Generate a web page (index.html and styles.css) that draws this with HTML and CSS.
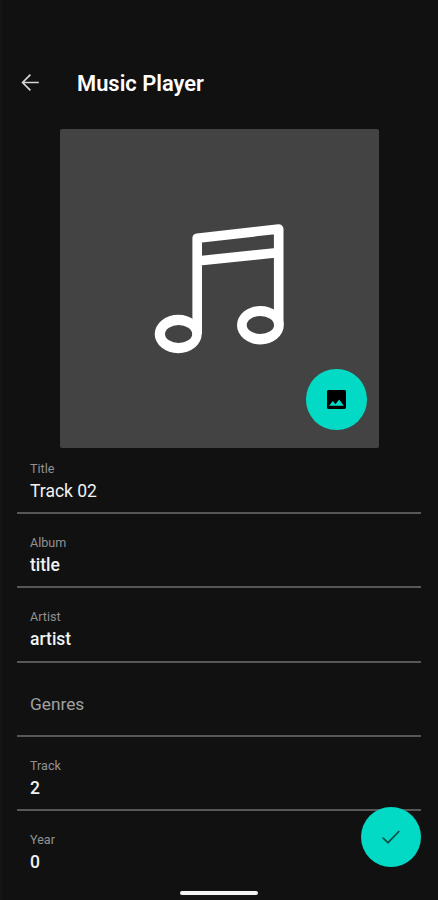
FILE: index.html
```
<!DOCTYPE html>
<html lang="en">
<head>
<meta charset="utf-8">
<title>Music Player</title>
<link rel="stylesheet" href="styles.css">
</head>
<body>
<main class="screen">
  <header class="bar">
    <svg class="back" viewBox="0 0 20 20"><path d="M18.800 9.500H2.700M10.400 1.700L2.600 9.500l7.800 7.800"/></svg>
    <h1 class="heading">Music Player</h1>
  </header>
  <section class="cover">
    <svg class="note" viewBox="0 0 132 132">
      <path d="M43.2 110V14.2L124.7 5V101M43.2 37L124.7 28.6"/>
      <path class="head" fill-rule="evenodd" d="M.7 110a23.5 19.2 0 1 0 47 0a23.5 19.2 0 1 0-47 0zM11 110a13.6 8.9 0 1 1 27.2 0a13.6 8.9 0 1 1-27.2 0z"/>
      <path class="head" fill-rule="evenodd" d="M83 101.2a23.4 19.2 0 1 0 46.8 0a23.4 19.2 0 1 0-46.8 0zM92.7 101a13.7 8.9 0 1 1 27.4 0a13.7 8.9 0 1 1-27.4 0z"/>
    </svg>
    <button class="fab pick" aria-label="Choose image">
      <svg class="image" viewBox="3 3 18 18"><path d="M21 19V4.500c0-.8-.7-1.500-1.500-1.500h-15C3.700 3 3 3.700 3 4.500v15c0 .8.700 1.500 1.500 1.500h15c.8 0 1.500-.7 1.500-1.500zM8.500 13.500l2.500 3.010L14.500 12l4.500 6H5l3.500-4.500z"/></svg>
    </button>
  </section>
  <form class="fields">
    <div class="field"><span class="label">Title</span><span class="value track">Track 02</span></div>
    <div class="field"><span class="label">Album</span><span class="value">title</span></div>
    <div class="field"><span class="label">Artist</span><span class="value">artist</span></div>
    <div class="field empty"><span class="hint">Genres</span></div>
    <div class="field"><span class="label">Track</span><span class="value">2</span></div>
    <div class="field"><span class="label">Year</span><span class="value">0</span></div>
  </form>
  <button class="fab save" aria-label="Save">
    <svg class="check" viewBox="0 0 20 16"><path d="M1.500 8.500L7 13.700L18.300 2"/></svg>
  </button>
  <div class="home"></div>
</main>
</body>
</html>
```
FILE: styles.css
```
* { box-sizing: border-box; }
body { margin: 0; background: #111; }
.screen {
  position: relative;
  width: 438px;
  height: 900px;
  overflow: hidden;
  padding-top: 58px;
  background: #111;
  border-left: 2px solid #151515;
  color: #f2f2f2;
  font-family: Roboto, sans-serif;
}
.bar { display: flex; align-items: center; height: 50px; padding-left: 18px; }
.back { width: 20px; height: 20px; fill: none; stroke: #d6d6d6; stroke-width: 1.7; }
.heading { margin: 2px 0 0 37px; font-size: 21.900px; line-height: 28px; font-weight: 600; color: #fff; }
.cover {
  position: relative;
  width: 319px;
  height: 319px;
  margin: 21px 0 0 58px;
  border-radius: 2px;
  background: #434343;
}
.note {
  display: block;
  position: absolute;
  left: 94px;
  top: 95px;
  width: 132px;
  height: 132px;
  fill: none;
  stroke: #fff;
  stroke-width: 9.600;
  stroke-linejoin: round;
}
.note .head { fill: #fff; stroke: none; }
.fab {
  position: absolute;
  display: flex;
  align-items: center;
  justify-content: center;
  width: 60.500px;
  height: 60.500px;
  padding: 0;
  border: 0;
  border-radius: 50%;
  background: #03dac5;
}
.pick { right: 12.500px; bottom: 18.500px; }
.save { right: 17px; bottom: 33px; width: 60px; height: 60px; }
.image { width: 19px; height: 19px; fill: #000; }
.check { width: 20px; height: 16px; fill: none; stroke: #104f49; stroke-width: 1.700; }
.fields { margin: 0 17px 0 15px; }
.field {
  display: flex;
  flex-direction: column;
  height: 74.200px;
  padding: 21px 0 0 13px;
  border-bottom: 2px solid #575757;
}
.field:first-child { height: 66.200px; padding-top: 13px; }
.field:last-child { border-bottom: 0; }
.label { font-size: 12.600px; line-height: 16px; color: #929292; }
.value { margin-top: 2px; font-size: 17.500px; line-height: 24px; font-weight: 500; }
.track { font-weight: 400; }
.hint { margin-top: 8px; font-size: 17.300px; line-height: 24px; color: #a0a0a0; }
.home {
  position: absolute;
  left: 178px;
  bottom: 5px;
  width: 78px;
  height: 4px;
  border-radius: 2px;
  background: #f2f2f2;
}
```
